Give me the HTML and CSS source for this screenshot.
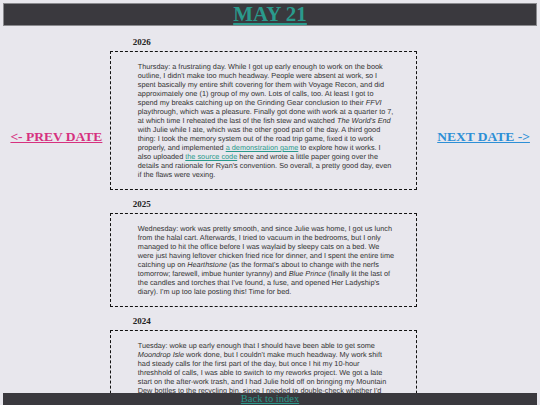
FILE: index.html
```html
<html>
<head>
    <link rel="stylesheet" href="styles.css">
</head>
<body>
    <header class="top-bar">
        <h1><a href="#">MAY 21</a></h1>
    </header>

    <main class="layout">
        <nav class="side">
            <a class="prev-link" href="#">&lt;- PREV DATE</a>
        </nav>

        <section class="entries">
            <article class="entry">
                <h2>2026</h2>
                <div class="entry-body">
                    <p>Thursday: a frustrating day. While I got up early enough to work on the book outline, I didn't make too much headway. People were absent at work, so I spent basically my entire shift covering for them with Voyage Recon, and did approximately one (1) group of my own. Lots of calls, too. At least I got to spend my breaks catching up on the Grinding Gear conclusion to their <em>FFVI</em> playthrough, which was a pleasure. Finally got done with work at a quarter to 7, at which time I reheated the last of the fish stew and watched <em>The World's End</em> with Julie while I ate, which was the other good part of the day. A third good thing: I took the memory system out of the road trip game, fixed it to work properly, and implemented <a href="#">a demonstration game</a> to explore how it works. I also uploaded <a href="#">the source code</a> here and wrote a little paper going over the details and rationale for Ryan's convention. So overall, a pretty good day, even if the flaws were vexing.</p>
                </div>
            </article>

            <article class="entry">
                <h2>2025</h2>
                <div class="entry-body">
                    <p>Wednesday: work was pretty smooth, and since Julie was home, I got us lunch from the halal cart. Afterwards, I tried to vacuum in the bedrooms, but I only managed to hit the office before I was waylaid by sleepy cats on a bed. We were just having leftover chicken fried rice for dinner, and I spent the entire time catching up on <em>Hearthstone</em> (as the format's about to change with the nerfs tomorrow; farewell, imbue hunter tyranny) and <em>Blue Prince</em> (finally lit the last of the candles and torches that I've found, a fuse, and opened Her Ladyship's diary). I'm up too late posting this! Time for bed.</p>
                </div>
            </article>

            <article class="entry">
                <h2>2024</h2>
                <div class="entry-body">
                    <p>Tuesday: woke up early enough that I should have been able to get some <em>Moondrop Isle</em> work done, but I couldn't make much headway. My work shift had steady calls for the first part of the day, but once I hit my 10-hour threshhold of calls, I was able to switch to my reworks project. We got a late start on the after-work trash, and I had Julie hold off on bringing my Mountain Dew bottles to the recycling bin, since I needed to double-check whether I'd saved any of the caps for the sweepstakes codes. Dinner was leftovers, and then an early night.</p>
                </div>
            </article>
        </section>

        <nav class="side">
            <a class="next-link" href="#">NEXT DATE -&gt;</a>
        </nav>
    </main>

    <footer class="bottom-bar">
        <a href="#">Back to index</a>
    </footer>
</body>
</html>
```

FILE: styles.css
```css
body {
    margin: 3px;
    background: #e8e7ed;
    font-family: "Liberation Serif", serif;
    color: #222;
}

a {
    color: #2a9a8c;
}

.top-bar {
    background: #3a393e;
    border: 1px solid #8a8a8e;
    text-align: center;
}

.top-bar h1 {
    margin: 0;
    font-size: 21px;
    line-height: 21px;
    font-weight: bold;
}

.layout {
    display: grid;
    grid-template-columns: 20% 60% 20%;
    padding-bottom: 20px;
}

.side {
    display: flex;
    justify-content: center;
    padding-top: 103px;
}

.side a {
    font-size: 13.5px;
    font-weight: bold;
    height: 16px;
}

.prev-link {
    color: #d6317f;
}

.next-link {
    color: #2d8fd6;
}

.entries {
    display: flex;
    flex-direction: column;
    gap: 9px;
    padding-top: 11px;
    margin-right: 13px;
}

.entry h2 {
    margin: 0 0 3px 23px;
    font-size: 9px;
    line-height: 11px;
    color: #222;
}

.entry-body {
    border: 1px dashed #111;
    padding: 10px 22px 10px 27px;
}

/* small body copy: skip hinting so glyph widths stay true to size */
.entry-body p {
    margin: 0;
    font-family: "Liberation Sans", Arial, sans-serif;
    font-size: 7.3px;
    line-height: 9px;
    color: #333;
    text-rendering: geometricPrecision;
}

.entry-body a {
    color: #2a9a8c;
}

.bottom-bar {
    position: fixed;
    left: 3px;
    right: 3px;
    bottom: 0;
    height: 12px;
    background: #3a393e;
    text-align: center;
    font-size: 10.5px;
    line-height: 12px;
}
```
